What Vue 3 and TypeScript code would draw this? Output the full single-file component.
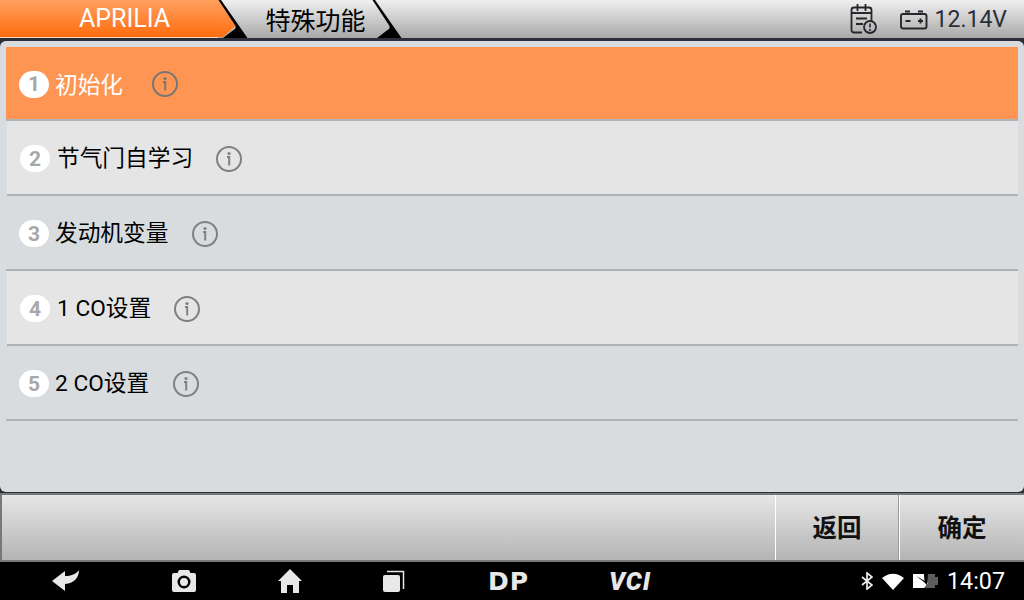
<template>
  <div class="screen">
    <header class="topbar">
      <div class="tab tab--active">APRILIA</div>
      <svg class="chevron" width="30" height="38" viewBox="0 0 30 38">
        <defs>
          <linearGradient id="orangeGrad" x1="0" y1="0" x2="0" y2="38" gradientUnits="userSpaceOnUse">
            <stop offset="0" stop-color="#ffa060" />
            <stop offset="1" stop-color="#ff6c0e" />
          </linearGradient>
        </defs>
        <path d="M0 0H1L17.500 26L5 37H0Z" fill="url(#orangeGrad)" />
        <path d="M0.500 0H3L29.500 38H5L17.500 28.500L17.500 26Z" fill="#000" />
      </svg>
      <div class="tab tab--second">特殊功能</div>
      <svg class="chevron" width="30" height="38" viewBox="0 0 30 38">
        <path d="M0.500 0H3L29.500 38H5L17.500 28.500L17.500 26Z" fill="#000" />
      </svg>
      <div class="status">
        <svg class="status-cal" width="30" height="32" viewBox="0 0 30 32" fill="none" stroke="#26262c" stroke-width="1.800">
          <path d="M13 29.500H5Q2.500 29.500 2.500 27V7Q2.500 4.500 5 4.500H20Q22.500 4.500 22.500 7V18" />
          <path d="M8.500 1V8M16.500 1V8M2.500 10H22.500M7 15.500H18M7 21H14" />
          <circle cx="21" cy="24" r="6" />
          <path d="M21 20.500V24.500M21 26V28" stroke-width="1.600" />
        </svg>
        <svg class="status-bat" width="28" height="20" viewBox="0 0 28 20" fill="none" stroke="#26262c" stroke-width="1.900">
          <rect x="1" y="4" width="25.500" height="14.500" rx="2" />
          <path d="M5 1.500H10M18 1.500H23M5.500 11H10.500M18 11H23M20.500 8.500V13.500" />
        </svg>
        <span class="voltage">12.14V</span>
      </div>
    </header>

    <main class="panel">
      <ul class="list">
        <li
          v-for="(item, i) in items"
          :key="item"
          class="row"
          :class="{ 'row--active': i === 0, 'row--alt': i % 2 === 1 }"
        >
          <span class="badge">{{ i + 1 }}</span>
          <span class="label">{{ item }}</span>
          <svg class="info" width="28" height="28" viewBox="0 0 28 28" fill="none">
            <circle cx="14" cy="14" r="12" stroke="currentColor" stroke-width="2" />
            <circle cx="14" cy="8.500" r="1.600" fill="currentColor" />
            <path d="M12 12H14.200V20.500" stroke="currentColor" stroke-width="2" />
          </svg>
        </li>
      </ul>
    </main>

    <div class="toolbar">
      <button class="btn">返回</button>
      <button class="btn btn--last">确定</button>
    </div>

    <nav class="navbar">
      <div class="nav-icons">
        <svg class="ic-back" width="30" height="24" viewBox="0 0 30 24">
          <path d="M1 12L14 2V7C20 7 25 5 28 1C28 8 24 14 14 15V22Z" fill="#e8e8e8" />
        </svg>
        <svg class="ic-cam" width="26" height="24" viewBox="0 0 26 24">
          <path fill-rule="evenodd" d="M8 1H18L19.500 4H23Q25 4 25 6V21Q25 23 23 23H3Q1 23 1 21V6Q1 4 3 4H6.500ZM13 6.500A6.500 6.500 0 1 0 13 19.500A6.500 6.500 0 1 0 13 6.500ZM13 9A4 4 0 1 1 13 17A4 4 0 1 1 13 9Z" fill="#e8e8e8" />
        </svg>
        <svg class="ic-home" width="26" height="26" viewBox="0 0 26 26">
          <path d="M13 1L25 13H22V25H16V17H10V25H4V13H1Z" fill="#e8e8e8" />
        </svg>
        <svg class="ic-recent" width="24" height="24" viewBox="0 0 24 24">
          <rect x="1" y="6" width="17" height="17" rx="2" fill="#e8e8e8" />
          <path d="M5 2.500H21.500V20" fill="none" stroke="#e8e8e8" stroke-width="1.500" />
        </svg>
        <span class="dp">DP</span>
        <span class="vci">VCI</span>
      </div>
      <div class="sys">
        <svg width="12" height="18" viewBox="0 0 12 18" fill="none" stroke="#eee" stroke-width="1.700">
          <path d="M1 5L11 13L6 17V1L11 5L1 13" />
        </svg>
        <svg width="22" height="17" viewBox="0 0 22 17"><path d="M0 5Q11 -3.500 22 5L11 17Z" fill="#fff" /></svg>
        <svg width="25" height="16" viewBox="0 0 25 16">
          <rect x="0" y="1" width="22" height="14" fill="#5c5c5c" />
          <rect x="22" y="4" width="3" height="8" fill="#5c5c5c" />
          <path d="M0 1H11L11 7L15 10L11 15H0Z" fill="#fff" />
          <path d="M3 3L12 8L11 1L15 1L14 12L11 9Z" fill="#000" />
        </svg>
        <span class="clock">14:07</span>
      </div>
    </nav>
  </div>
</template>

<script setup lang="ts">
const items: string[] = ['初始化', '节气门自学习', '发动机变量', '1 CO设置', '2 CO设置']
</script>

<style>
html, body { margin: 0; background: #000; }
</style>

<style scoped>
.screen {
  width: 1024px;
  height: 600px;
  display: flex;
  flex-direction: column;
  overflow: hidden;
  font-family: "Roboto", "Noto Sans CJK SC", sans-serif;
  background: #2c2f3a;
}
.topbar {
  height: 38px;
  flex: none;
  display: flex;
  align-items: stretch;
  background: linear-gradient(#f0f0f0, #a8a8a8);
  border-bottom: 3px solid #2c2f3a;
}
.tab {
  display: flex;
  align-items: center;
  justify-content: center;
  font-size: 25px;
}
.tab--active {
  width: 218px;
  padding-left: 31px;
  box-sizing: border-box;
  color: #fff;
  background: linear-gradient(#ffa060, #ff6c0e);
  border-bottom: 1px solid #ffd9b8;
}
.tab--second {
  width: 124px;
  padding-left: 11px;
  box-sizing: border-box;
  color: #000;
}
.chevron { flex: none; }
.status {
  margin-left: auto;
  display: flex;
  align-items: center;
  padding-right: 17px;
  color: #2b2d38;
}
.status-cal { margin-right: 21px; }
.status-bat { margin-right: 7px; margin-top: 1px; }
.voltage { font-size: 23px; }
.panel {
  flex: none;
  height: 451px;
  box-sizing: border-box;
  padding: 6px 6px 0;
  background: #d8dcde;
  border-radius: 6px;
}
.list { list-style: none; margin: 0; padding: 0; }
.row {
  height: 75px;
  box-sizing: border-box;
  display: flex;
  align-items: center;
  padding-left: 13px;
  padding-top: 2px;
  border-bottom: 2px solid #b0b2b5;
  color: #000;
}
.row:first-child { height: 74px; }
.row--active { background: #ff9552; color: #fff; }
.row--alt { background: #e5e5e5; margin-left: 1px; }
.badge {
  width: 30px;
  height: 27px;
  flex: none;
  border-radius: 14px;
  background: #fff;
  color: #a8a8a8;
  display: flex;
  align-items: center;
  justify-content: center;
  font-size: 21px;
  font-weight: 700;
}
.label {
  margin-left: 6px;
  margin-bottom: 4px;
  font-size: 22.700px;
}
.row--active .label { margin-bottom: 2px; }
.row--alt .label { margin-left: 7px; }
.info { margin-left: 23px; color: #808080; }
.row--alt .info { margin-left: 22px; }
.row--active .info { margin-left: 28px; color: #777; }
.toolbar {
  flex: none;
  height: 69px;
  margin-top: 1px;
  box-sizing: border-box;
  display: flex;
  justify-content: flex-end;
  background: linear-gradient(#e6e6e6, #b4b4b4);
  border: 2px solid #77787c;
  border-right-width: 0;
}
.btn {
  width: 124px;
  border: 0;
  border-left: 1px solid #fff;
  border-right: 1px solid #9a9a9a;
  background: transparent;
  font-family: inherit;
  font-size: 24.500px;
  font-weight: 700;
  color: #111;
  padding: 0 0 2px;
}
.btn--last { width: 125px; border-right: 0; }
.navbar {
  flex: 1;
  background: #000;
  display: flex;
  align-items: center;
  justify-content: space-between;
  padding-right: 19px;
}
.nav-icons { display: flex; align-items: center; padding-left: 51px; }
.ic-cam { margin-left: 90px; }
.ic-home { margin-left: 80px; }
.ic-recent { margin-left: 79px; }
.dp {
  margin-left: 82px;
  width: 42px;
  color: #e8e8e8;
  font: 700 25px "DejaVu Sans", sans-serif;
  letter-spacing: 1px;
}
.vci {
  margin-left: 79px;
  color: #e8e8e8;
  font: italic 900 25px "Roboto", sans-serif;
  letter-spacing: 1px;
}
.sys { display: flex; align-items: center; gap: 9px; }
.clock { color: #fff; font-size: 23.300px; }
</style>
